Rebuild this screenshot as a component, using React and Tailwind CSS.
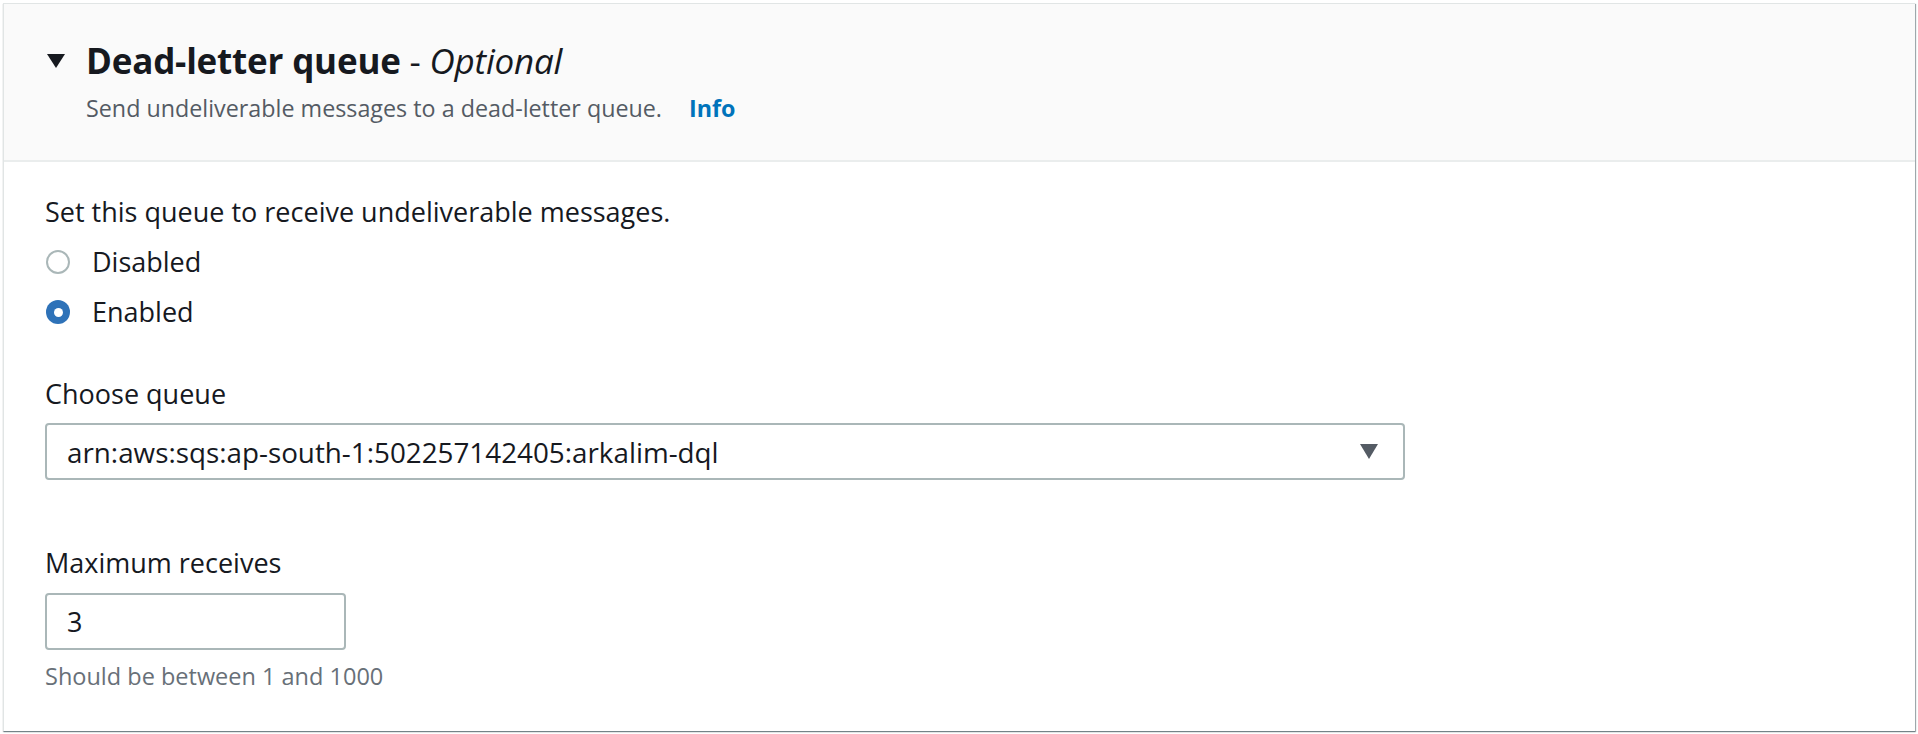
const Radio = ({ checked, label }) => (
  <label className="flex items-center h-[50px] gap-[22px] cursor-pointer">
    {checked ? (
      <span className="w-[24px] h-[24px] rounded-full bg-[#2e72b8] flex items-center justify-center shrink-0">
        <span className="w-[9px] h-[9px] rounded-full bg-white" />
      </span>
    ) : (
      <span className="w-[24px] h-[24px] rounded-full border-2 border-[#aab7b8] bg-white shrink-0" />
    )}
    <span className="text-[27px] leading-[30px] text-[#16191f]">{label}</span>
  </label>
);

export default function App() {
  return (
    <div
      className="bg-white p-[3px] h-[734px]"
      style={{ fontFamily: '"Open Sans", "Noto Sans", sans-serif' }}
    >
      <div className="h-full bg-white border-t border-l border-[#e1e5e5] shadow-[1px_1px_1px_0_rgba(0,28,36,0.35),0_1px_1px_0_rgba(0,28,36,0.3)]">
        {/* Header */}
        <div className="bg-[#fafafa] border-b-2 border-[#eaeded] pt-[39px] pb-[38px] pl-[42px]">
          <div className="flex items-center gap-[20px] h-[36px]">
            <svg width="20" height="16" viewBox="0 0 20 16" className="shrink-0">
              <polygon points="1,1 19,1 10,15" fill="#16191f" />
            </svg>
            <h2 className="text-[35px] leading-[36px] text-[#16191f] tracking-[-0.2px]">
              <span className="font-bold">Dead-letter queue</span>
              <span> - </span>
              <em className="italic">Optional</em>
            </h2>
          </div>
          <div className="flex items-center mt-[15px] pl-[40px] h-[28px]">
            <span className="text-[23.3px] leading-[28px] text-[#545b64]">
              Send undeliverable messages to a dead-letter queue.
            </span>
            <a className="ml-[27px] text-[23.3px] leading-[28px] font-bold text-[#0073bb]">Info</a>
          </div>
        </div>

        {/* Body */}
        <div className="pt-[35px] pl-[41px]">
          <p className="text-[27px] leading-[30px] text-[#16191f]">
            Set this queue to receive undeliverable messages.
          </p>
          <div className="mt-[10px] pl-[1px]">
            <Radio label="Disabled" />
            <Radio label="Enabled" checked />
          </div>

          <p className="mt-[42px] text-[27px] leading-[30px] text-[#16191f]">Choose queue</p>
          <div className="mt-[14px] w-[1360px] h-[57px] border-2 border-[#aab7b8] rounded-[4px] flex items-center justify-between pl-[20px] pr-[25px]">
            <span className="text-[27.8px] leading-[30px] text-[#16191f]">
              arn:aws:sqs:ap-south-1:502257142405:arkalim-dql
            </span>
            <svg width="18" height="15" viewBox="0 0 18 15">
              <polygon points="0,0 18,0 9,15" fill="#545b64" />
            </svg>
          </div>

          <p className="mt-[68px] text-[27px] leading-[30px] text-[#16191f]">Maximum receives</p>
          <div className="mt-[15px] w-[301px] h-[57px] border-2 border-[#aab7b8] rounded-[4px] flex items-center pl-[20px]">
            <span className="text-[27px] leading-[30px] text-[#16191f]">3</span>
          </div>
          <p className="mt-[13px] text-[23.5px] leading-[26px] text-[#687078]">
            Should be between 1 and 1000
          </p>
        </div>
      </div>
    </div>
  );
}
